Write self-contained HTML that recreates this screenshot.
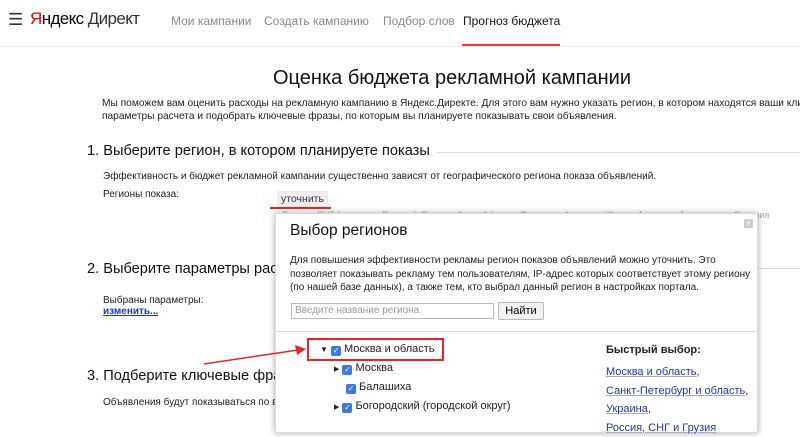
<!DOCTYPE html>
<html><head><meta charset="utf-8">
<style>
*{margin:0;padding:0;box-sizing:border-box}
body{width:800px;height:415px;overflow:hidden;background:#fff;font-family:"Liberation Sans",sans-serif;color:#000;position:relative}
.a{position:absolute;white-space:nowrap}
.nav{font-size:12px;color:#888;top:14px}
.h2{font-size:14.6px;color:#111}
.t{font-size:10px;color:#222}
.cb{display:inline-block;width:10px;height:10px;background:#3b7be0;border-radius:2px;vertical-align:-1px;margin-right:3px;color:#fff;font-size:8px;line-height:10px;text-align:center}
.lk{color:#2233bb;text-decoration:underline;text-decoration-color:#aab}
</style></head><body>
<div class="a" style="left:8px;top:10px;font-size:17px;color:#333">☰</div>
<div class="a" style="left:30px;top:9px;font-size:17px;letter-spacing:-0.6px"><span style="color:#e00">Я</span>ндекс <span style="color:#333">Директ</span></div>
<div class="a nav" style="left:171px">Мои кампании</div>
<div class="a nav" style="left:264px">Создать кампанию</div>
<div class="a nav" style="left:383px">Подбор слов</div>
<div class="a nav" style="left:463px;color:#111">Прогноз бюджета</div>
<div class="a" style="left:462px;top:44px;width:98px;height:2px;background:#f33"></div>
<div class="a" style="left:0;top:46px;width:800px;height:1px;background:#eee"></div>

<div class="a" style="left:273px;top:67px;font-size:20px;color:#111">Оценка бюджета рекламной кампании</div>
<div class="a t" style="left:102px;top:97px;line-height:13px;font-size:10.2px">Мы поможем вам оценить расходы на рекламную кампанию в Яндекс.Директе. Для этого вам нужно указать регион, в котором находятся ваши клиенты,<br>параметры расчета и подобрать ключевые фразы, по которым вы планируете показывать свои объявления.</div>

<div class="a h2" style="left:87px;top:143px">1. Выберите регион, в котором планируете показы</div>
<div class="a" style="left:437px;top:152px;width:363px;height:1px;background:#ddd"></div>
<div class="a t" style="left:103px;top:171px">Эффективность и бюджет рекламной кампании существенно зависят от географического региона показа объявлений.</div>
<div class="a t" style="left:103px;top:189px">Регионы показа:</div>
<div class="a" style="left:277px;top:191px;background:#eee;padding:2px 4px;font-size:10.5px;color:#334">уточнить</div>
<div class="a" style="left:270px;top:207px;width:61px;height:2px;background:#e22"></div>
<div class="a" style="left:282px;top:210px;font-size:9px;color:#aaa">Россия, СНГ (исключая Россию), Европа, Азия, Африка, Северная Америка, Южная Америка, Австралия и Океания</div>

<div class="a h2" style="left:87px;top:261px">2. Выберите параметры расчета</div>
<div class="a" style="left:400px;top:268px;width:400px;height:1px;background:#ddd"></div>
<div class="a t" style="left:103px;top:295px">Выбраны параметры:</div>
<div class="a t" style="left:103px;top:306px;font-weight:bold;color:#2233cc;text-decoration:underline">изменить...</div>
<div class="a h2" style="left:87px;top:368px">3. Подберите ключевые фразы</div>
<div class="a t" style="left:103px;top:397px">Объявления будут показываться по всем фразам</div>

<div class="a" style="left:275px;top:213px;width:483px;height:220px;background:#fff;box-shadow:0 0 6px rgba(0,0,0,.35);border:1px solid #ddd">
 <div class="a" style="left:468px;top:5px;width:9px;height:9px;background:#ccc;color:#fff;font-size:8px;line-height:9px;text-align:center">×</div>
 <div class="a" style="left:14px;top:8px;font-size:15.5px;color:#111">Выбор регионов</div>
 <div class="a t" style="left:14px;top:40px;line-height:13.5px">Для повышения эффективности рекламы регион показов объявлений можно уточнить. Это<br>позволяет показывать рекламу тем пользователям, IP-адрес которых соответствует этому региону<br>(по нашей базе данных), а также тем, кто выбрал данный регион в настройках портала.</div>
 <div class="a" style="left:15px;top:89px;width:203px;height:16px;border:1px solid #bbb;font-size:10px;color:#999;padding:1px 3px">Введите название региона</div>
 <div class="a" style="left:222px;top:88px;width:46px;height:18px;border:1px solid #bbb;border-radius:2px;background:#f2f2f2;font-size:11px;text-align:center;line-height:16px">Найти</div>
 <div class="a" style="left:0;top:117px;width:483px;height:1px;background:#ddd"></div>
 <div class="a" style="left:31px;top:124px;width:137px;height:23px;border:2px solid #e22"></div>
 <div class="a t" style="left:44px;top:129px;font-size:11px"><span style="font-size:8px">▼</span> <span class="cb">✓</span>Москва и область</div>
 <div class="a t" style="left:58px;top:148px;font-size:11px"><span style="font-size:7px">▶</span> <span class="cb">✓</span>Москва</div>
 <div class="a t" style="left:70px;top:167px;font-size:11px"><span class="cb">✓</span>Балашиха</div>
 <div class="a t" style="left:58px;top:186px;font-size:11px"><span style="font-size:7px">▶</span> <span class="cb">✓</span>Богородский (городской округ)</div>
 <div class="a t" style="left:330px;top:130px;font-weight:bold;font-size:11px">Быстрый выбор:</div>
 <div class="a t" style="left:330px;top:149px;line-height:18.5px;font-size:11px"><span class="lk">Москва и область</span>,<br><span class="lk">Санкт-Петербург и область</span>,<br><span class="lk">Украина</span>,<br><span class="lk">Россия, СНГ и Грузия</span></div>
</div>
<svg class="a" style="left:200px;top:340px" width="110" height="30"><line x1="4" y1="24" x2="98" y2="10" stroke="#e22" stroke-width="1.5"/><polygon points="106,9 95,5 97,15" fill="#e22"/></svg>
</body></html>
